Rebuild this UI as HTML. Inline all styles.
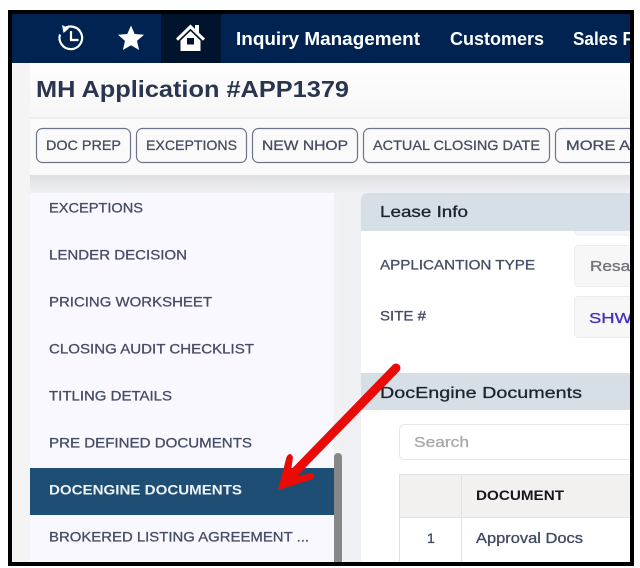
<!DOCTYPE html>
<html><head><meta charset="utf-8"><style>
html,body{margin:0;padding:0;background:#fff;width:640px;height:568px;overflow:hidden}
svg{display:block}
text{font-family:"Liberation Sans",sans-serif}
.m{stroke-width:.3px;paint-order:stroke}
</style></head><body>
<svg width="640" height="568" viewBox="0 0 640 568" xmlns="http://www.w3.org/2000/svg">
<defs>
<linearGradient id="g1" x1="0" y1="0" x2="0" y2="1"><stop offset="0" stop-color="#fff"/><stop offset="1" stop-color="#f6f6f7"/></linearGradient>
<linearGradient id="g2" x1="0" y1="0" x2="0" y2="1"><stop offset="0" stop-color="#dfdfe2"/><stop offset="1" stop-color="#eff0f3"/></linearGradient>
<clipPath id="c"><rect x="12" y="14" width="618" height="548"/></clipPath>
<filter id="b" x="-5%" y="-5%" width="110%" height="110%"><feGaussianBlur stdDeviation="0.35"/></filter>
</defs>
<rect x="8" y="10" width="626" height="556" fill="#000"/>
<g clip-path="url(#c)">
<rect x="12" y="14" width="618" height="548" fill="#eff0f3"/>
<rect x="12" y="63" width="18" height="499" fill="#f4f4f4"/>
<rect x="12" y="14" width="618" height="49" fill="#002352"/>
<rect x="161" y="14" width="60" height="49" fill="#00142e"/>
<rect x="30" y="63" width="600" height="54" fill="url(#g1)"/>
<rect x="30" y="117" width="600" height="2" fill="#efeff0"/>
<rect x="30" y="119" width="600" height="56" fill="#fafafa"/>
<rect x="30" y="175" width="600" height="18" fill="url(#g2)"/>
<rect x="30" y="193" width="304" height="369" fill="#f9f8fe"/>
<rect x="334" y="193" width="8" height="369" fill="#f1f1f2"/>
<rect x="334" y="453" width="8" height="112" rx="4" fill="#878787"/>
<rect x="30" y="468" width="304" height="47" fill="#1f4e74"/>

<g filter="url(#b)">
<!-- nav icons -->
<g fill="none" stroke="#fff" stroke-width="2.200">
<path d="M60 34.500 A11.300 11.300 0 1 0 63.500 29.200"/>
<path d="M71 31v9h7.500"/>
</g>
<path d="M62 25l7 3.500-5.500 4.500z" fill="#fff"/>
<path d="M131 25.500l3.700 8.500 9.300.8-7 6.100 2.100 9.100-8.100-4.800-8.100 4.800 2.100-9.100-7-6.100 9.300-.8z" fill="#fff"/>
<path d="M190.500 24.500L176 38.500l2 2.200 12.500-12 12.500 12 2-2.200-6-5.800V25h-4v3.900z" fill="#fff"/>
<path d="M190.500 31l-10 9.600V51h20V40.600zM187 38h7v6.500h-7z" fill="#fff" fill-rule="evenodd"/>
<!-- nav text -->
<g fill="#fff" font-weight="700" font-size="18">
<text x="236" y="45" textLength="184" lengthAdjust="spacingAndGlyphs">Inquiry Management</text>
<text x="450" y="45" textLength="94" lengthAdjust="spacingAndGlyphs">Customers</text>
<text x="573" y="45" textLength="60" lengthAdjust="spacingAndGlyphs">Sales F</text>
</g>
<text x="36" y="97" font-size="23.500" font-weight="700" fill="#2b3550" textLength="313" lengthAdjust="spacingAndGlyphs">MH Application #APP1379</text>
<!-- buttons -->
<g fill="none" stroke="#6d7589" stroke-width="1.200">
<rect x="36.500" y="128.500" width="94" height="34" rx="6"/>
<rect x="136.500" y="128.500" width="110" height="34" rx="6"/>
<rect x="252.500" y="128.500" width="105" height="34" rx="6"/>
<rect x="363.500" y="128.500" width="186" height="34" rx="6"/>
<rect x="555.500" y="128.500" width="100" height="34" rx="6"/>
</g>
<g fill="#464e63" stroke="#464e63" class="m" font-size="14">
<text x="46" y="150" textLength="75" lengthAdjust="spacingAndGlyphs">DOC PREP</text>
<text x="146" y="150" textLength="91" lengthAdjust="spacingAndGlyphs">EXCEPTIONS</text>
<text x="262" y="150" textLength="86" lengthAdjust="spacingAndGlyphs">NEW NHOP</text>
<text x="373" y="150" textLength="167" lengthAdjust="spacingAndGlyphs">ACTUAL CLOSING DATE</text>
<text x="566" y="150" textLength="76" lengthAdjust="spacingAndGlyphs">MORE AC</text>
</g>
<!-- sidebar -->
<g fill="#454d66" stroke="#454d66" class="m" font-size="14">
<text x="49" y="212.500" textLength="94" lengthAdjust="spacingAndGlyphs">EXCEPTIONS</text>
<text x="49" y="259.500" textLength="138" lengthAdjust="spacingAndGlyphs">LENDER DECISION</text>
<text x="49" y="306.500" textLength="163" lengthAdjust="spacingAndGlyphs">PRICING WORKSHEET</text>
<text x="49" y="353.500" textLength="205" lengthAdjust="spacingAndGlyphs">CLOSING AUDIT CHECKLIST</text>
<text x="49" y="400.500" textLength="123" lengthAdjust="spacingAndGlyphs">TITLING DETAILS</text>
<text x="49" y="447.500" textLength="203" lengthAdjust="spacingAndGlyphs">PRE DEFINED DOCUMENTS</text>
<text x="49" y="541.500" textLength="260" lengthAdjust="spacingAndGlyphs">BROKERED LISTING AGREEMENT ...</text>
</g>
<text x="49" y="494.500" font-size="14" textLength="193" lengthAdjust="spacingAndGlyphs" fill="#eef3f7" font-weight="700">DOCENGINE DOCUMENTS</text>
</g>
<!-- main panel -->
<rect x="361" y="231" width="269" height="331" fill="#fff"/>
<g stroke="#ececec" fill="#f7f7f7">
<rect x="574.500" y="215.500" width="80" height="19.500" rx="4"/>
<rect x="574.500" y="245.500" width="80" height="41" rx="4"/>
<rect x="574.500" y="296.500" width="80" height="41" rx="4"/>
</g>
<path d="M361 231v-31a7 7 0 0 1 7-7h262v38z" fill="#d5dfe5"/>
<rect x="361" y="373" width="269" height="37" fill="#d5dfe5"/>
<rect x="399.500" y="424.500" width="260" height="35" rx="5" fill="#fff" stroke="#e6e6e6"/>
<rect x="399.500" y="474.500" width="260" height="100" fill="#fff" stroke="#e2e2e2"/>
<rect x="400" y="475" width="260" height="42" fill="#f2f1f0"/>
<path d="M400 517.500h240M461.500 475v95" stroke="#e2e2e2" fill="none"/>
<g filter="url(#b)">
<text x="380" y="217" font-size="16" fill="#1e2430" stroke="#1e2430" class="m" textLength="88" lengthAdjust="spacingAndGlyphs">Lease Info</text>
<text x="380" y="398" font-size="16" fill="#1e2430" stroke="#1e2430" class="m" textLength="202" lengthAdjust="spacingAndGlyphs">DocEngine Documents</text>
<text x="380" y="269.500" font-size="13.500" fill="#454d66" stroke="#454d66" class="m" textLength="155" lengthAdjust="spacingAndGlyphs">APPLICANTION TYPE</text>
<text x="380" y="320.500" font-size="13.500" fill="#454d66" stroke="#454d66" class="m" textLength="46" lengthAdjust="spacingAndGlyphs">SITE #</text>
<text x="590" y="271" font-size="15" fill="#71717a" stroke="#71717a" class="m" textLength="44" lengthAdjust="spacingAndGlyphs">Resal</text>
<text x="589" y="323" font-size="15" fill="#4a2fc0" stroke="#4a2fc0" class="m" textLength="43" lengthAdjust="spacingAndGlyphs">SHW</text>
<text x="414" y="447" font-size="15" fill="#a9a9a9" stroke="#a9a9a9" class="m" textLength="55" lengthAdjust="spacingAndGlyphs">Search</text>
<text x="476" y="500" font-size="14" font-weight="700" fill="#17191f" textLength="88" lengthAdjust="spacingAndGlyphs">DOCUMENT</text>
<text x="427" y="543" font-size="14" fill="#3f4960" stroke="#3f4960" class="m">1</text>
<text x="476" y="543" font-size="14.500" fill="#3f4960" stroke="#3f4960" class="m" textLength="107" lengthAdjust="spacingAndGlyphs">Approval Docs</text>
</g>
<!-- arrow -->
<path d="M396 368L292 475" stroke="#ea0a06" stroke-width="9" stroke-linecap="round" fill="none"/>
<path d="M278 490L286.500 457Q290 451 293 457L291 471L299 476L311 473Q316 475 313 479Z" fill="#ea0a06"/>
</g>
</svg>
</body></html>
